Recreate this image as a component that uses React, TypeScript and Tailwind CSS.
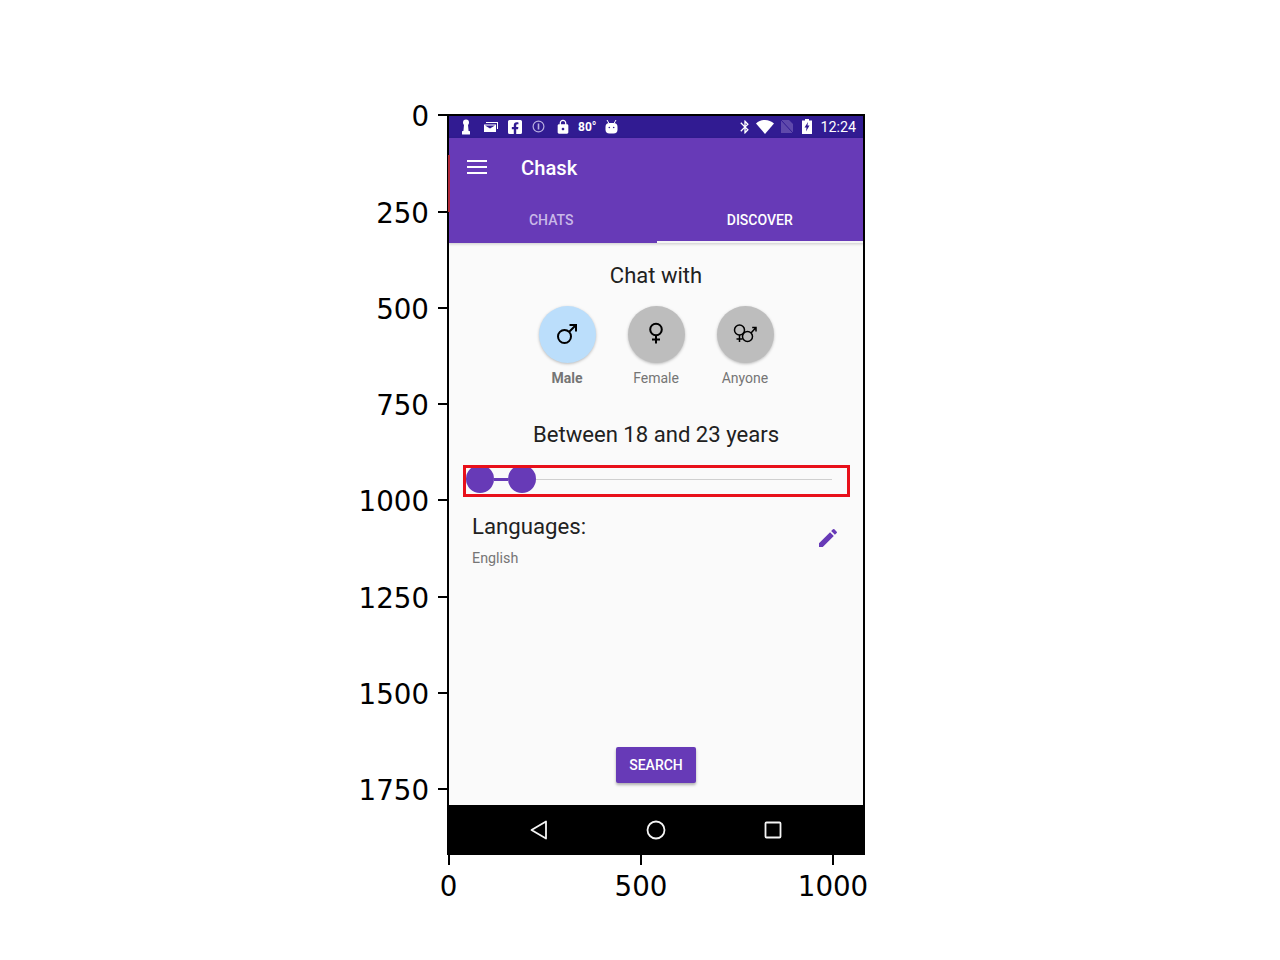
import { MdEdit, MdLock, MdBluetooth } from 'react-icons/md'
import { FaFacebookSquare } from 'react-icons/fa'

const yTicks = [
  { label: '0', top: 0 },
  { label: '250', top: 96.5 },
  { label: '500', top: 192.5 },
  { label: '750', top: 288.5 },
  { label: '1000', top: 385 },
  { label: '1250', top: 481.5 },
  { label: '1500', top: 577.5 },
  { label: '1750', top: 674 },
]

const xTicks = [
  { label: '0', left: 0.5 },
  { label: '500', left: 193 },
  { label: '1000', left: 385 },
]

function MaleIcon() {
  return (
    <svg className="-mt-[2px]" width="24" height="24" viewBox="0 0 24 24" fill="none" stroke="#000" strokeWidth="2">
      <circle cx="9.5" cy="14.5" r="6.5" />
      <path d="M14 10 L21 3 M14.500 3 H21 V9.500" />
    </svg>
  )
}

function FemaleIcon() {
  return (
    <svg className="-mt-[3px]" width="24" height="24" viewBox="0 0 24 24" fill="none" stroke="#000" strokeWidth="2">
      <circle cx="12" cy="8.5" r="5.8" />
      <path d="M12 14 V22.500 M8 18.500 H16" />
    </svg>
  )
}

function AnyoneIcon() {
  return (
    <svg className="-mt-[2px]" width="26" height="24" viewBox="0 0 26 24" fill="none" stroke="#000" strokeWidth="1.500">
      <circle cx="7.5" cy="8" r="5" />
      <path d="M7.500 13 V20 M4.500 17 H10.500" />
      <circle cx="15.5" cy="14.5" r="5" />
      <path d="M19 11 L24 5.500 M20.200 5.500 H24 V9.500" />
    </svg>
  )
}

function StatusBar() {
  return (
    <div className="flex h-[23px] items-center bg-[#311b92] text-white">
      {/* chess pawn */}
      <svg className="ml-[12px]" width="12" height="16" viewBox="0 0 12 16" fill="#fff">
        <circle cx="6" cy="3.5" r="3" />
        <path d="M4 6h4l.6 6H3.400z" />
        <rect x="2" y="12" width="8" height="3.500" rx=".5" />
      </svg>
      {/* mail tray */}
      <svg className="ml-[12px]" width="14" height="10" viewBox="0 0 14 10" fill="#fff">
        <path d="M2 0h12v7h-1V1H2z" />
        <path d="M0 2.500h12V10H0zM1 3.500l5 3 5-3z" fillRule="evenodd" />
      </svg>
      <FaFacebookSquare className="ml-[9px]" size={16} />
      <svg className="ml-[9px]" width="13" height="13" viewBox="0 0 13 13" fill="none" stroke="#b9aee0" strokeWidth="1.200">
        <circle cx="6.5" cy="6.5" r="5.400" />
        <path d="M6.500 3.500v6" strokeWidth="1.600" />
      </svg>
      <MdLock className="ml-[10px]" size={16} />
      <span className="ml-[7px] font-['Roboto',sans-serif] text-[12px] leading-none font-bold">80°</span>
      {/* android head */}
      <svg className="ml-[9px]" width="13" height="14" viewBox="0 0 13 14" fill="#fff">
        <path d="M2 0l2 3.500M11 0L9 3.500" stroke="#fff" strokeWidth="1" />
        <rect x="0.5" y="3" width="12" height="10.500" rx="4" />
        <circle cx="4.300" cy="7.500" r=".8" fill="#311b92" />
        <circle cx="8.700" cy="7.500" r=".8" fill="#311b92" />
      </svg>
      <MdBluetooth className="ml-auto" size={16} />
      {/* wifi */}
      <svg className="ml-[3px]" width="18" height="14" viewBox="0 0 18 14" fill="#fff">
        <path d="M0 3.500C2.500 1.300 5.600 0 9 0s6.500 1.300 9 3.500L9 14z" />
      </svg>
      {/* no sim signal */}
      <svg className="ml-[7px]" width="12" height="13" viewBox="0 0 12 13" fill="#5f49ab">
        <path d="M0 0h8l4 4v9H0z" />
        <path d="M0 0L12 13" stroke="#311b92" strokeWidth="1" />
      </svg>
      {/* battery charging */}
      <svg className="ml-[9px]" width="10" height="15" viewBox="0 0 10 15" fill="#fff">
        <path d="M3 0h4v1.500h3V15H0V1.500h3z" />
        <path d="M6 3L2.500 8.500h2L4 12.500 7.500 6.500h-2z" fill="#311b92" />
      </svg>
      <span className="mt-[1px] mr-[8px] ml-[8px] font-['Roboto',sans-serif] text-[14.300px] leading-none">12:24</span>
    </div>
  )
}

function ChoiceButton({ label, bg, bold, children }: { label: string; bg: string; bold?: boolean; children: React.ReactNode }) {
  return (
    <div className="flex w-[57px] flex-col items-center">
      <div className={`flex h-[57px] w-[57px] items-center justify-center rounded-full shadow-[0_1px_3px_rgba(0,0,0,0.25)] ${bg}`}>
        {children}
      </div>
      <span className={`mt-[6px] text-[14px] leading-[18px] whitespace-nowrap text-[#757575] ${bold ? 'font-bold' : ''}`}>
        {label}
      </span>
    </div>
  )
}

export default function App() {
  return (
    <div className="h-[960px] w-[1280px] overflow-hidden bg-white pt-[115px] pl-[448px] font-['Roboto',sans-serif]">
      <div className="relative h-[740px] w-[416px]">
        {/* Phone screen */}
        <div className="flex h-full w-full flex-col overflow-hidden">
          <StatusBar />

          {/* App bar + tabs */}
          <div className="relative z-10 bg-[#673ab7] shadow-[0_1px_3px_rgba(0,0,0,0.2)]">
            <div className="flex h-[60px] items-center text-white">
              <svg className="-mt-[3px] ml-[19px]" width="20" height="14" viewBox="0 0 20 14" fill="#fff">
                <rect y="0" width="20" height="2" />
                <rect y="6" width="20" height="2" />
                <rect y="12" width="20" height="2" />
              </svg>
              <span className="ml-[34px] text-[20.200px] leading-none font-medium">Chask</span>
            </div>
            <div className="flex h-[45px] text-[14px] font-medium">
              <div className="flex flex-1 items-center justify-center pr-[2px] text-[#c9b8e8]">CHATS</div>
              <div className="flex flex-1 items-center justify-center border-b-[2px] border-[#f5f5f5] pt-[1px] pr-[1px] text-white">DISCOVER</div>
            </div>
          </div>

          {/* Content */}
          <div className="flex flex-1 flex-col bg-[#fafafa] text-[#212121]">
            <div className="mt-[20px] text-center text-[22px] leading-[26px]">Chat with</div>
            <div className="mt-[17px] flex justify-center gap-[32px]">
              <ChoiceButton label="Male" bg="bg-[#bbdefb]" bold>
                <MaleIcon />
              </ChoiceButton>
              <ChoiceButton label="Female" bg="bg-[#bdbdbd]">
                <FemaleIcon />
              </ChoiceButton>
              <ChoiceButton label="Anyone" bg="bg-[#bdbdbd]">
                <AnyoneIcon />
              </ChoiceButton>
            </div>
            <div className="mt-[34px] text-center text-[22.100px] leading-[26px]">Between 18 and 23 years</div>

            {/* Range slider */}
            <div className="mt-[18px] ml-[18px] flex h-[28px] w-[366px] items-center">
              <div className="h-[28px] w-[28px] rounded-full bg-[#673ab7]" />
              <div className="h-[3px] w-[14px] bg-[#673ab7]" />
              <div className="h-[28px] w-[28px] rounded-full bg-[#673ab7]" />
              <div className="h-px flex-1 bg-[#d0d0d0]" />
            </div>

            <div className="mt-[19px] flex pr-[24px] pl-[24px]">
              <div className="flex-1">
                <div className="text-[22.200px] leading-[28px]">Languages:</div>
                <div className="mt-[9px] text-[14.300px] leading-[18px] text-[#757575]">English</div>
              </div>
              <MdEdit className="mt-[14px] text-[#673ab7]" size={24} />
            </div>

            <div className="mt-auto mb-[22px] flex justify-center">
              <div className="flex h-[36px] w-[80px] items-center justify-center rounded-[2px] bg-[#673ab7] pt-px text-[14px] font-medium text-white shadow-[0_2px_3px_rgba(0,0,0,0.3)]">
                SEARCH
              </div>
            </div>
          </div>

          {/* Android nav bar */}
          <div className="flex h-[50px] items-center bg-black">
            <svg className="ml-[81px]" width="20" height="20" viewBox="0 0 20 20" fill="none" stroke="#f5f5f5" strokeWidth="1.800" strokeLinejoin="round">
              <path d="M17 1.500V18.500L2.500 10z" />
            </svg>
            <svg className="ml-[97px]" width="20" height="20" viewBox="0 0 20 20" fill="none" stroke="#f5f5f5" strokeWidth="1.800">
              <circle cx="10" cy="10" r="8.500" />
            </svg>
            <svg className="ml-[98px]" width="18" height="18" viewBox="0 0 18 18" fill="none" stroke="#f5f5f5" strokeWidth="1.800">
              <rect x="1.500" y="1.500" width="15" height="15" rx="1" />
            </svg>
          </div>
        </div>

        {/* Plot spines */}
        <div className="pointer-events-none absolute -inset-x-px -top-px bottom-0 z-20 border-[2px] border-black" />

        {/* Annotation box */}
        <div className="pointer-events-none absolute top-[350px] left-[15px] z-20 h-[32px] w-[387px] border-[3px] border-[#e8101a]" />
        <div className="absolute top-[40px] left-[0px] z-20 h-[57px] w-[2px] bg-[#b02a3a]" />

        {/* Y axis */}
        {yTicks.map((t) => (
          <div key={t.label} className="absolute right-full flex h-0 items-center" style={{ top: t.top }}>
            <span className="mr-[9px] translate-y-[2px] font-['DejaVu_Sans',sans-serif] text-[27.700px] leading-none text-black">{t.label}</span>
            <div className="h-[2px] w-[10px] bg-black" />
          </div>
        ))}

        {/* X axis */}
        {xTicks.map((t) => (
          <div key={t.label} className="absolute top-full flex w-0 flex-col items-center" style={{ left: t.left }}>
            <div className="h-[10px] w-[2px] shrink-0 bg-black" />
            <span className="mt-[5px] font-['DejaVu_Sans',sans-serif] text-[27.700px] leading-[34px] text-black">{t.label}</span>
          </div>
        ))}
      </div>
    </div>
  )
}
